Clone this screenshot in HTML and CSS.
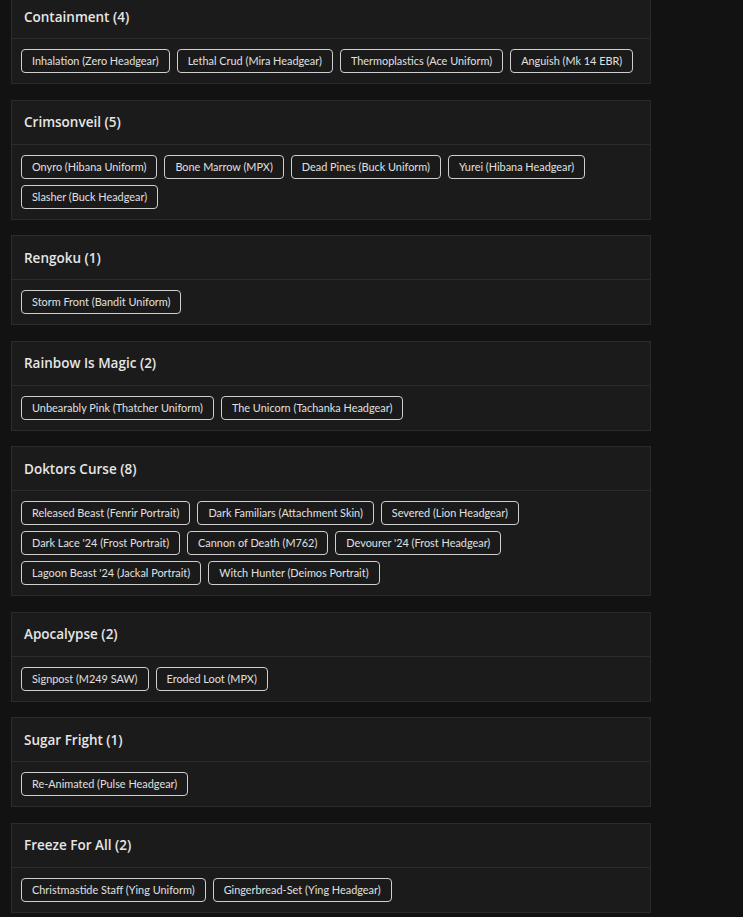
FILE: index.html
```html
<!DOCTYPE html>
<html lang="en">
<head>
<meta charset="utf-8">
<title>Bundles</title>
<link rel="stylesheet" href="styles.css">
</head>
<body>
<main class="list">
  <section class="card">
    <h2 class="card-head">Containment (4)</h2>
    <div class="card-body">
      <span class="chip">Inhalation (Zero Headgear)</span>
      <span class="chip">Lethal Crud (Mira Headgear)</span>
      <span class="chip">Thermoplastics (Ace Uniform)</span>
      <span class="chip">Anguish (Mk 14 EBR)</span>
    </div>
  </section>
  <section class="card">
    <h2 class="card-head">Crimsonveil (5)</h2>
    <div class="card-body">
      <span class="chip">Onyro (Hibana Uniform)</span>
      <span class="chip">Bone Marrow (MPX)</span>
      <span class="chip">Dead Pines (Buck Uniform)</span>
      <span class="chip">Yurei (Hibana Headgear)</span>
      <span class="chip">Slasher (Buck Headgear)</span>
    </div>
  </section>
  <section class="card">
    <h2 class="card-head">Rengoku (1)</h2>
    <div class="card-body">
      <span class="chip">Storm Front (Bandit Uniform)</span>
    </div>
  </section>
  <section class="card">
    <h2 class="card-head">Rainbow Is Magic (2)</h2>
    <div class="card-body">
      <span class="chip">Unbearably Pink (Thatcher Uniform)</span>
      <span class="chip">The Unicorn (Tachanka Headgear)</span>
    </div>
  </section>
  <section class="card">
    <h2 class="card-head">Doktors Curse (8)</h2>
    <div class="card-body">
      <span class="chip">Released Beast (Fenrir Portrait)</span>
      <span class="chip">Dark Familiars (Attachment Skin)</span>
      <span class="chip">Severed (Lion Headgear)</span>
      <span class="chip">Dark Lace '24 (Frost Portrait)</span>
      <span class="chip">Cannon of Death (M762)</span>
      <span class="chip">Devourer '24 (Frost Headgear)</span>
      <span class="chip">Lagoon Beast '24 (Jackal Portrait)</span>
      <span class="chip">Witch Hunter (Deimos Portrait)</span>
    </div>
  </section>
  <section class="card">
    <h2 class="card-head">Apocalypse (2)</h2>
    <div class="card-body">
      <span class="chip">Signpost (M249 SAW)</span>
      <span class="chip">Eroded Loot (MPX)</span>
    </div>
  </section>
  <section class="card">
    <h2 class="card-head">Sugar Fright (1)</h2>
    <div class="card-body">
      <span class="chip">Re-Animated (Pulse Headgear)</span>
    </div>
  </section>
  <section class="card">
    <h2 class="card-head">Freeze For All (2)</h2>
    <div class="card-body">
      <span class="chip">Christmastide Staff (Ying Uniform)</span>
      <span class="chip">Gingerbread-Set (Ying Headgear)</span>
    </div>
  </section>
</main>
</body>
</html>
```
FILE: styles.css
```css
html, body {
  margin: 0;
  padding: 0;
  background: #121212;
}

body {
  overflow: hidden;
}

.list {
  width: 640px;
  margin-top: -6px;
  padding-left: 11px;
  display: flex;
  flex-direction: column;
  gap: 15.5px;
}

.card {
  background: #1b1b1b;
  border: 1px solid #2b2b2b;
  box-sizing: border-box;
  width: 640px;
}

.card-head {
  margin: 0;
  height: 43px;
  display: flex;
  align-items: center;
  padding: 0 12px;
  border-bottom: 1px solid #2b2b2b;
  font-family: "Open Sans", "Liberation Sans", sans-serif;
  font-size: 13.5px;
  font-weight: 600;
  color: #e6e6e6;
}

.card-body {
  display: flex;
  flex-wrap: wrap;
  gap: 6px 7px;
  padding: 10px 9px 10px;
}

.chip {
  display: inline-block;
  height: 24px;
  box-sizing: border-box;
  line-height: 22px;
  padding: 0 10px;
  border: 1px solid #cfcfcf;
  border-radius: 4px;
  background: #1a1a1a;
  color: #e0e0e0;
  font-family: Lato, "Liberation Sans", sans-serif;
  font-size: 10.9px;
  white-space: nowrap;
}
```
